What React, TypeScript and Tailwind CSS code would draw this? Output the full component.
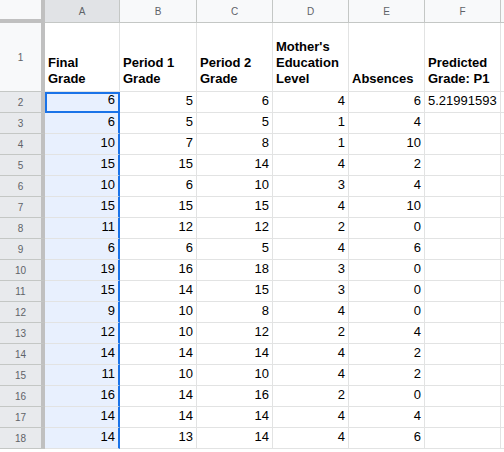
import React from "react";

const rows: (string | number)[][] = [
  [6, 5, 6, 4, 6, "5.21991593"],
  [6, 5, 5, 1, 4, ""],
  [10, 7, 8, 1, 10, ""],
  [15, 15, 14, 4, 2, ""],
  [10, 6, 10, 3, 4, ""],
  [15, 15, 15, 4, 10, ""],
  [11, 12, 12, 2, 0, ""],
  [6, 6, 5, 4, 6, ""],
  [19, 16, 18, 3, 0, ""],
  [15, 14, 15, 3, 0, ""],
  [9, 10, 8, 4, 0, ""],
  [12, 10, 12, 2, 4, ""],
  [14, 14, 14, 4, 2, ""],
  [11, 10, 10, 4, 2, ""],
  [16, 14, 16, 2, 0, ""],
  [14, 14, 14, 4, 4, ""],
  [14, 13, 14, 4, 6, ""],
];
const widths = ["w-[75px]", "w-[77px]", "w-[76px]", "w-[76px]", "w-[76px]", "w-[76px]", "w-[40px]"];
const heads = ["Final\nGrade", "Period 1\nGrade", "Period 2\nGrade", "Mother's\nEducation\nLevel", "Absences", "Predicted\nGrade: P1", ""];
const letters = ["A", "B", "C", "D", "E", "F", ""];

export default function App() {
  return (
    <div className="w-[504px] h-[452px] overflow-hidden bg-white text-[13px] text-black" style={{ fontFamily: "Arial, 'Liberation Sans', sans-serif" }}>
      <div className="flex h-[23px]">
        <div className="w-[45px] shrink-0 bg-[#f8f9fa] border-r-4 border-b-4 border-[#c0c0c0]" />
        {letters.map((l, i) => (
          <div key={i} className={`${widths[i]} shrink-0 border-r border-b border-[#c4c7c5] flex items-center justify-center text-[10px] text-[#5f6368] ${i === 0 ? "bg-[#e1e3e6]" : "bg-[#f8f9fa]"}`}>{l}</div>
        ))}
      </div>
      <div className="flex h-[69px]">
        <div className="w-[45px] shrink-0 bg-[#f8f9fa] border-r-4 border-b border-r-[#c0c0c0] border-b-[#c4c7c5] flex items-center justify-center text-[10px] text-[#5f6368]">1</div>
        {heads.map((h, i) => (
          <div key={i} className={`${widths[i]} shrink-0 border-r border-b border-[#e2e3e3] flex items-end px-[3px] pb-[4px] font-bold leading-[16px] whitespace-pre overflow-hidden`}>{h}</div>
        ))}
      </div>
      {rows.map((r, ri) => (
        <div key={ri} className="flex h-[21px]">
          <div className="w-[45px] shrink-0 bg-[#e8eaed] border-r-4 border-b border-r-[#c0c0c0] border-b-[#c4c7c5] flex items-center justify-center text-[10px] text-[#5f6368]">{ri + 2}</div>
          {[...r, ""].map((v, i) => (
            <div key={i} className={`${widths[i]} shrink-0 flex items-end pb-[2px] px-[3px] overflow-hidden whitespace-nowrap ${i === 5 ? "justify-start" : "justify-end"} ${i === 0 ? (ri === 0 ? "bg-[#e8f0fe] border-2 border-[#1a73e8]" : "bg-[#e8f0fe] border-r-2 border-b border-r-[#1a73e8] border-b-[#e2e3e3]") : "border-r border-b border-[#e2e3e3]"}`}>{v}</div>
          ))}
        </div>
      ))}
    </div>
  );
}
